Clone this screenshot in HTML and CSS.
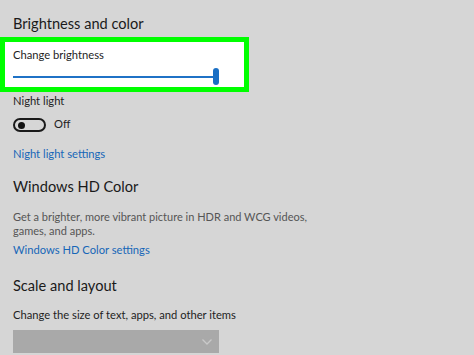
FILE: index.html
```html
<!DOCTYPE html>
<html>
<head>
<meta charset="utf-8">
<link rel="stylesheet" href="styles.css">
</head>
<body>
<div class="page">
  <h2 class="heading first">Brightness and color</h2>
  <div class="highlight">
    <div class="label">Change brightness</div>
    <div class="slider">
      <div class="track"></div>
      <div class="thumb"></div>
    </div>
  </div>
  <div class="label night">Night light</div>
  <div class="toggle-row">
    <div class="toggle"><div class="knob"></div></div>
    <span class="toggle-text">Off</span>
  </div>
  <a class="link nl-link">Night light settings</a>
  <h2 class="heading hd">Windows HD Color</h2>
  <p class="desc">Get a brighter, more vibrant picture in HDR and WCG videos,<br>games, and apps.</p>
  <a class="link hd-link">Windows HD Color settings</a>
  <h2 class="heading scale">Scale and layout</h2>
  <div class="label size">Change the size of text, apps, and other items</div>
  <div class="dropdown">
    <svg class="chev" width="10" height="6" viewBox="0 0 10 6"><path d="M0.5 0.5 L5 5 L9.5 0.5" fill="none" stroke="#c9c9c9" stroke-width="1.3"/></svg>
  </div>
</div>
</body>
</html>
```
FILE: styles.css
```css
html, body {
  margin: 0;
  padding: 0;
  background: #d6d6d6;
}
body {
  width: 474px;
  height: 355px;
  overflow: hidden;
  font-family: "Lato", "Open Sans", sans-serif;
  color: #1c1c1c;
}
.page {
  padding-left: 13px;
  display: flex;
  flex-direction: column;
  align-items: flex-start;
}
.heading {
  margin: 0;
  font-size: 14.6px;
  font-weight: 400;
  line-height: 20px;
  color: #1a1a1a;
}
.first { margin-top: 14px; }
.highlight {
  margin-top: 3px;
  margin-left: -13px;
  box-sizing: border-box;
  width: 249px;
  border: 5px solid #00ff00;
  background: #ffffff;
  padding: 5px 0 2px 8px;
}
.label {
  font-size: 11.2px;
  line-height: 16px;
  color: #1e1e1e;
}
.slider {
  margin-top: 5px;
  position: relative;
  width: 206px;
  height: 17px;
  display: flex;
  align-items: center;
}
.track {
  width: 203px;
  height: 2px;
  background: #1f72c6;
}
.thumb {
  position: absolute;
  left: 200px;
  top: 0;
  width: 6px;
  height: 17px;
  border-radius: 3px;
  background: #1a6fc4;
}
.night { margin-top: 1px; }
.toggle-row {
  margin-top: 8px;
  display: flex;
  align-items: center;
  gap: 8px;
}
.toggle {
  box-sizing: border-box;
  width: 33px;
  height: 14px;
  border: 2px solid #1a1a1a;
  border-radius: 7px;
  display: flex;
  align-items: center;
  padding-left: 3px;
}
.knob {
  width: 7px;
  height: 7px;
  border-radius: 50%;
  background: #111;
}
.toggle-text {
  font-size: 11.2px;
  line-height: 16px;
  color: #1e1e1e;
  position: relative;
  top: -1px;
}
.link {
  font-size: 11.2px;
  line-height: 16px;
  color: #1667b8;
  text-decoration: none;
}
.nl-link { margin-top: 13px; }
.hd { margin-top: 15px; }
.desc {
  margin: 13px 0 0;
  font-size: 11px;
  line-height: 14px;
  color: #555555;
}
.hd-link { margin-top: 4px; }
.scale { margin-top: 18px; }
.size { margin-top: 11px; }
.dropdown {
  margin-top: 7px;
  width: 206px;
  height: 23px;
  background: #a9a9a9;
  display: flex;
  align-items: center;
  justify-content: flex-end;
  padding-right: 7px;
  box-sizing: border-box;
}
```
